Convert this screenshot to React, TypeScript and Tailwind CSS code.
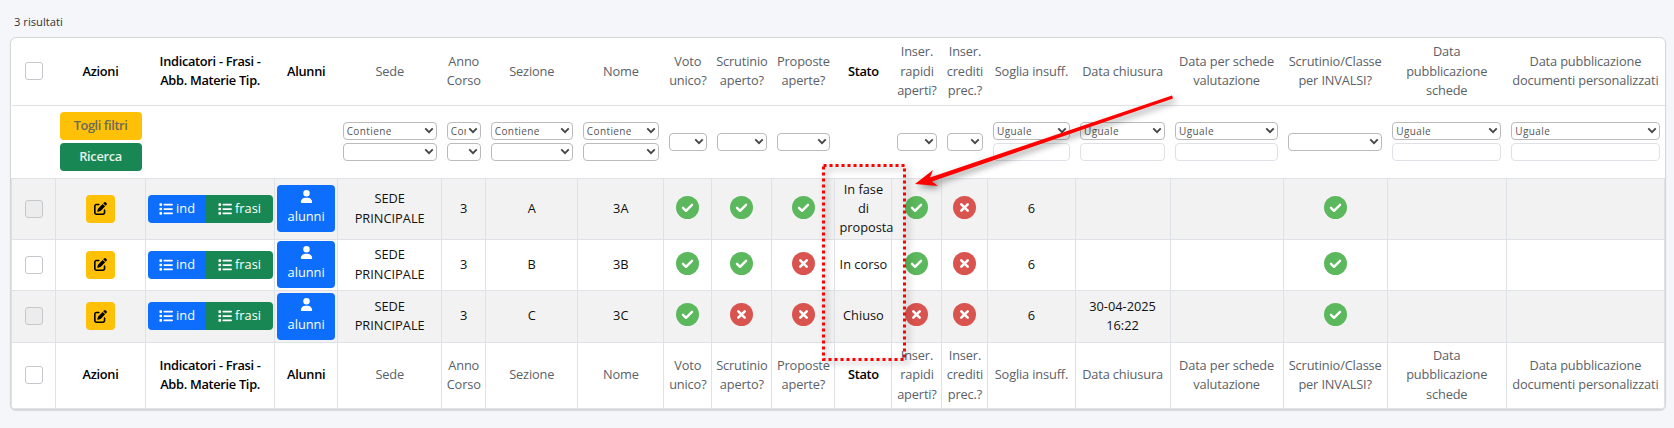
import { FaList, FaPenToSquare, FaUser } from "react-icons/fa6";

type Filter = "none" | "single" | "contiene" | "uguale" | "actions";

interface Column {
  title: string;
  width: string;
  dark?: boolean;
  filter: Filter;
}

const columns: Column[] = [
  { title: "", width: "w-[44px]", filter: "none" },
  { title: "Azioni", width: "w-[90px]", dark: true, filter: "actions" },
  { title: "Indicatori - Frasi - Abb. Materie Tip.", width: "w-[129px]", dark: true, filter: "none" },
  { title: "Alunni", width: "w-[63px]", dark: true, filter: "none" },
  { title: "Sede", width: "w-[104px]", filter: "contiene" },
  { title: "Anno Corso", width: "w-[44px]", filter: "contiene" },
  { title: "Sezione", width: "w-[92px]", filter: "contiene" },
  { title: "Nome", width: "w-[86px]", filter: "contiene" },
  { title: "Voto unico?", width: "w-[48px]", filter: "single" },
  { title: "Scrutinio aperto?", width: "w-[60px]", filter: "single" },
  { title: "Proposte aperte?", width: "w-[63px]", filter: "single" },
  { title: "Stato", width: "w-[57px]", dark: true, filter: "none" },
  { title: "Inser. rapidi aperti?", width: "w-[50px]", filter: "single" },
  { title: "Inser. crediti prec.?", width: "w-[46px]", filter: "single" },
  { title: "Soglia insuff.", width: "w-[87px]", filter: "uguale" },
  { title: "Data chiusura", width: "w-[95px]", filter: "uguale" },
  { title: "Data per schede valutazione", width: "w-[113px]", filter: "uguale" },
  { title: "Scrutinio/Classe per INVALSI?", width: "w-[104px]", filter: "single" },
  { title: "Data\npubblicazione\nschede", width: "w-[119px]", filter: "uguale" },
  { title: "Data pubblicazione documenti personalizzati", width: "w-[158px]", filter: "uguale" },
];

const rows = [
  { height: "h-[61px]", striped: true, disabled: true, sezione: "A", nome: "3A", voto: true, scrutinio: true, proposte: true, stato: "In fase di proposta", rapidi: true, chiusura: "" },
  { height: "h-[51px]", striped: false, disabled: false, sezione: "B", nome: "3B", voto: true, scrutinio: true, proposte: false, stato: "In corso", rapidi: true, chiusura: "" },
  { height: "h-[52px]", striped: true, disabled: true, sezione: "C", nome: "3C", voto: true, scrutinio: false, proposte: false, stato: "Chiuso", rapidi: false, chiusura: "30-04-2025 16:22" },
];

function Check({ disabled }: { disabled?: boolean }) {
  return (
    <input
      type="checkbox"
      disabled={disabled}
      className={`block mx-auto h-[18px] w-[18px] appearance-none rounded-[3px] border border-[#c4c8cc] ${disabled ? "bg-[#ececec]" : "bg-white"}`}
    />
  );
}

function Select({ label }: { label?: string }) {
  return (
    <div className="relative h-[18px]">
      <select className="block h-[18px] w-full appearance-none rounded-[4px] border border-[#bbbbbb] bg-white pl-[3px] pr-[14px] text-[10px] leading-[16px] tracking-[0.4px] text-[#555555]">
        <option>{label}</option>
      </select>
      <svg viewBox="0 0 12 8" className="pointer-events-none absolute right-[3px] top-[5px] h-[7px] w-[10px]">
        <path d="M1.5 1.5 6 6l4.5-4.5" fill="none" stroke="#444444" strokeWidth="2.2" />
      </svg>
    </div>
  );
}

function FilterCell({ filter }: { filter: Filter }) {
  if (filter === "actions") {
    return (
      <div className="flex flex-col gap-[3px]">
        <button className="h-[28px] rounded-[4px] bg-[#ffc107] font-semibold tracking-[-0.4px] text-[#6c6a5c]">Togli filtri</button>
        <button className="h-[28px] rounded-[4px] bg-[#198754] font-semibold tracking-[-0.3px] text-[#e4f3ec]">Ricerca</button>
      </div>
    );
  }
  if (filter === "single") return <Select />;
  if (filter === "contiene") {
    return (
      <div className="flex flex-col gap-[3px]">
        <Select label="Contiene" />
        <Select />
      </div>
    );
  }
  if (filter === "uguale") {
    return (
      <div className="flex flex-col gap-[3px]">
        <Select label="Uguale" />
        <input className="block h-[18px] w-full rounded-[4px] border border-[#dee2e6] bg-white" />
      </div>
    );
  }
  return null;
}

function Status({ ok }: { ok: boolean }) {
  return (
    <svg viewBox="0 0 23 23" className="mx-auto mb-[3px] block h-[23px] w-[23px]">
      <circle cx="11.5" cy="11.5" r="11.5" fill={ok ? "#5cb85c" : "#d9534f"} />
      {ok ? (
        <path d="M7 11.8l3 3 6-6" fill="none" stroke="#ffffff" strokeWidth="2.4" strokeLinecap="round" strokeLinejoin="round" />
      ) : (
        <path d="M8.3 8.3l6.4 6.4M14.7 8.3l-6.4 6.4" fill="none" stroke="#ffffff" strokeWidth="2.6" strokeLinecap="round" />
      )}
    </svg>
  );
}

function HeaderRow({ footer }: { footer?: boolean }) {
  return (
    <tr className={footer ? "h-[66px]" : "h-[67px] border-b border-[#dee2e6]"}>
      {columns.map((col, i) => (
        <th
          key={i}
          className={`whitespace-pre-line px-[2px] text-center align-middle ${col.dark ? "font-semibold tracking-[-0.3px] text-black" : "font-medium tracking-[-0.15px] text-[#5a6168]"} ${footer ? "border border-[#dee2e6]" : ""}`}
        >
          {i === 0 ? <Check /> : col.title}
        </th>
      ))}
    </tr>
  );
}

export default function App() {
  const td = "border border-[#dee2e6] px-[2px] text-center align-middle text-[#111111]";

  return (
    <div className="relative h-[428px] w-[1674px] overflow-hidden bg-[#f4f6fa] px-[10px] pt-[14px] font-['Open_Sans',sans-serif] text-[12.8px] leading-[19.2px]">
      <div className="mb-[7px] h-[16px] pl-[4px] text-[11.2px] leading-[16px] text-[#333333]">3 risultati</div>

      <div className="w-[1656px] overflow-hidden rounded-[6px] border border-[#d3d6da] bg-white shadow-[0_1px_1px_rgba(0,0,0,0.12)]">
        <table className="w-[1654px] table-fixed border-collapse">
          <colgroup>
            {columns.map((col, i) => (
              <col key={i} className={col.width} />
            ))}
          </colgroup>
          <thead>
            <HeaderRow />
            <tr className="h-[73px]">
              {columns.map((col, i) => (
                <td key={i} className={`align-middle ${col.filter === "actions" ? "px-[4px]" : "px-[5px]"}`}>
                  <FilterCell filter={col.filter} />
                </td>
              ))}
            </tr>
          </thead>
          <tbody>
            {rows.map((row) => (
              <tr key={row.nome} className={`${row.height} ${row.striped ? "bg-[#f2f2f2]" : "bg-white"}`}>
                <td className={td}>
                  <Check disabled={row.disabled} />
                </td>
                <td className={td}>
                  <button className="mx-auto flex h-[28px] w-[29px] items-center justify-center rounded-[4px] bg-[#ffc107]">
                    <FaPenToSquare className="text-[13px] text-black" />
                  </button>
                </td>
                <td className={td}>
                  <div className="flex h-[28px] w-[125px] overflow-hidden rounded-[4px] text-white">
                    <span className="flex w-[58px] items-center justify-center gap-[3px] bg-[#0d6efd]">
                      <FaList className="text-[14px]" />
                      ind
                    </span>
                    <span className="flex w-[67px] items-center justify-center gap-[3px] bg-[#198754]">
                      <FaList className="text-[14px]" />
                      frasi
                    </span>
                  </div>
                </td>
                <td className={td}>
                  <button className="mx-auto flex h-[47px] w-[58px] flex-col items-center justify-center rounded-[4px] bg-[#0d6efd] text-white">
                    <FaUser className="mb-[4px] text-[13px]" />
                    alunni
                  </button>
                </td>
                <td className={td}>SEDE PRINCIPALE</td>
                <td className={td}>3</td>
                <td className={td}>{row.sezione}</td>
                <td className={td}>{row.nome}</td>
                <td className={td}>
                  <Status ok={row.voto} />
                </td>
                <td className={td}>
                  <Status ok={row.scrutinio} />
                </td>
                <td className={td}>
                  <Status ok={row.proposte} />
                </td>
                <td className={`${td} !px-[4px]`}>{row.stato}</td>
                <td className={td}>
                  <Status ok={row.rapidi} />
                </td>
                <td className={td}>
                  <Status ok={false} />
                </td>
                <td className={td}>6</td>
                <td className={td}>{row.chiusura}</td>
                <td className={td}></td>
                <td className={td}>
                  <Status ok={true} />
                </td>
                <td className={td}></td>
                <td className={td}></td>
              </tr>
            ))}
          </tbody>
          <tfoot>
            <HeaderRow footer />
          </tfoot>
        </table>
      </div>

      {/* annotation drawn over the table */}
      <svg viewBox="0 0 1674 428" className="pointer-events-none absolute inset-0 h-[428px] w-[1674px] drop-shadow-[3px_3px_3px_rgba(0,0,0,0.4)]">
        <rect x="823.5" y="165.5" width="81" height="194" fill="none" stroke="#ff0000" strokeWidth="3" strokeDasharray="3 3" />
        <polygon points="915,184 933,170 930,177.5 1172,95.5 1173,98.5 932,181.5 938,186" fill="#ff0000" />
      </svg>
    </div>
  );
}
